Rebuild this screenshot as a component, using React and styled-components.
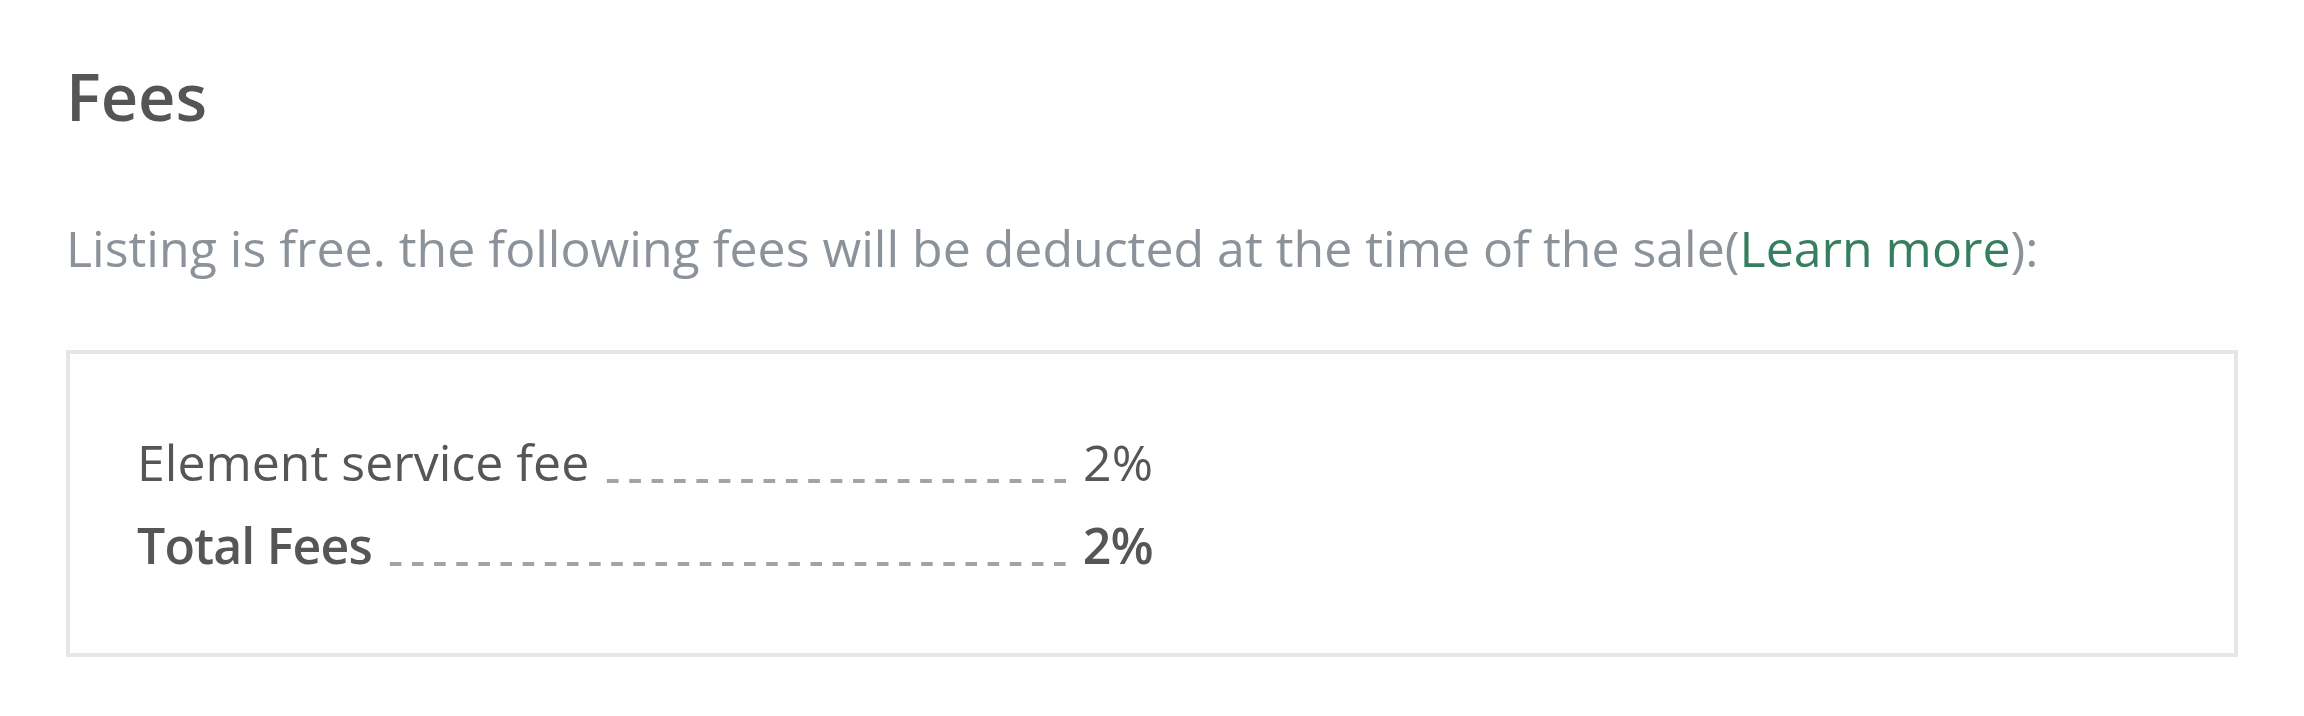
import React from "react";
import styled, { createGlobalStyle } from "styled-components";

const GlobalStyle = createGlobalStyle`
  html, body {
    margin: 0;
    padding: 0;
    background: #ffffff;
  }
  body {
    font-family: "Open Sans", "Noto Sans", "Liberation Sans", sans-serif;
  }
`;

const Page = styled.section`
  padding: 54px 66px 58px;
  display: flex;
  flex-direction: column;
`;

const Title = styled.h2`
  margin: 0;
  font-size: 65px;
  line-height: 84px;
  font-weight: 600;
  color: #555555;
`;

const Intro = styled.p`
  margin: 76px 0 0;
  font-size: 50px;
  line-height: 68px;
  font-weight: 400;
  color: #8b929a;
`;

const Link = styled.a`
  color: #357f60;
  text-decoration: none;
`;

const FeeBox = styled.div`
  margin-top: 68px;
  border: 4px solid #e6e6ea;
  padding: 74px 67px;
  display: flex;
  flex-direction: column;
  gap: 15px;
`;

const Row = styled.div`
  width: 1016px;
  display: flex;
  align-items: baseline;
  font-size: 50px;
  line-height: 68px;
  color: #565656;
  font-weight: ${(p) => (p.$total ? 600 : 400)};
  letter-spacing: ${(p) => (p.$total ? "-0.8px" : "0")};
`;

const Label = styled.span`
  white-space: nowrap;
`;

/* each tile is a 12px dash with 4.75px of space on both sides;
   "space" spreads whole tiles evenly, like a browser dashed border */
const Leader = styled.span`
  flex: 1;
  height: 4px;
  margin: 0 12px 0 13px;
  background-image: linear-gradient(
    to right,
    transparent 0,
    transparent 4.75px,
    #a3a3a3 4.75px,
    #a3a3a3 16.75px,
    transparent 16.75px
  );
  background-size: 21.5px 4px;
  background-repeat: space no-repeat;
  transform: translateY(2px);
`;

const Value = styled.span`
  white-space: nowrap;
`;

const fees = [
  { label: "Element service fee", value: "2%" },
  { label: "Total Fees", value: "2%", total: true },
];

export default function App() {
  return (
    <>
      <GlobalStyle />
      <Page>
        <Title>Fees</Title>
        <Intro>
          Listing is free. the following fees will be deducted at the time of the sale(
          <Link href="#">Learn more</Link>):
        </Intro>
        <FeeBox>
          {fees.map((f) => (
            <Row key={f.label} $total={f.total}>
              <Label>{f.label}</Label>
              <Leader />
              <Value>{f.value}</Value>
            </Row>
          ))}
        </FeeBox>
      </Page>
    </>
  );
}
